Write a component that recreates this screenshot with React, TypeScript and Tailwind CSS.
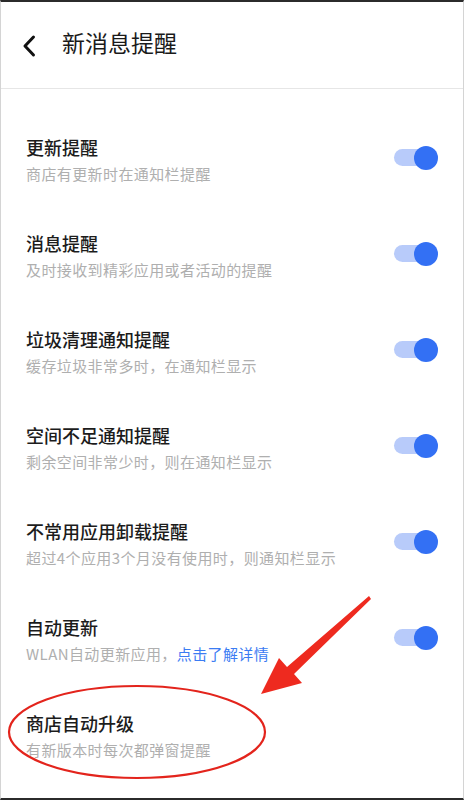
import React from "react";

const rows: { title: string; sub: React.ReactNode; toggle: boolean }[] = [
  { title: "更新提醒", sub: "商店有更新时在通知栏提醒", toggle: true },
  { title: "消息提醒", sub: "及时接收到精彩应用或者活动的提醒", toggle: true },
  { title: "垃圾清理通知提醒", sub: "缓存垃圾非常多时，在通知栏显示", toggle: true },
  { title: "空间不足通知提醒", sub: "剩余空间非常少时，则在通知栏显示", toggle: true },
  { title: "不常用应用卸载提醒", sub: "超过4个应用3个月没有使用时，则通知栏显示", toggle: true },
  {
    title: "自动更新",
    sub: (
      <>
        WLAN自动更新应用，<span className="text-[#3b7cf3]">点击了解详情</span>
      </>
    ),
    toggle: true,
  },
  { title: "商店自动升级", sub: "有新版本时每次都弹窗提醒", toggle: false },
];

function Toggle() {
  return (
    <div className="relative w-[44px] h-[24px] mb-[5px] shrink-0">
      <div className="absolute left-0 top-[3.5px] w-[36px] h-[17px] rounded-full bg-[#b8cbfa]" />
      <div className="absolute right-0 top-0 w-[24px] h-[24px] rounded-full bg-[#3370f4]" />
    </div>
  );
}

export default function App() {
  return (
    <div
      className="relative w-[464px] h-[800px] bg-white border-t-2 border-b-2 border-t-[#2b2b2b] border-b-[#2b2b2b] border-l border-r border-l-[#d4d4d4] border-r-[#d4d4d4] overflow-hidden"
      style={{ fontFamily: '"Noto Sans CJK SC", "Noto Sans", sans-serif' }}
    >
      <div className="h-[86px] flex items-center pl-[20px]">
        <svg width="16" height="24" viewBox="0 0 16 24" className="mt-[1px]">
          <path d="M12.5 3 L4 12 L12.5 21" fill="none" stroke="#111" strokeWidth="3" strokeLinecap="round" strokeLinejoin="round" />
        </svg>
        <div className="ml-[25px] mb-[7px] text-[23px] leading-[30px] text-[#1a1a1a]">新消息提醒</div>
      </div>
      <div className="h-px bg-[#e6e6e6]" />
      <div className="pt-[23px]">
        {rows.map((r, i) => (
          <div key={i} className="h-[96px] flex items-center justify-between pl-[25px] pr-[25px]">
            <div className="flex flex-col">
              <div className="text-[18px] leading-[24px] font-medium text-[#1c1c1c]">{r.title}</div>
              <div className="mt-[3px] text-[15px] leading-[24px] text-[#afafaf] tracking-[0.4px]">{r.sub}</div>
            </div>
            {r.toggle && <Toggle />}
          </div>
        ))}
      </div>
      <svg className="absolute left-0 top-0 pointer-events-none" width="464" height="800" viewBox="0 0 464 800">
        <ellipse cx="136" cy="730" rx="128" ry="46" fill="none" stroke="#e3241c" strokeWidth="2.2" />
        <polygon points="368,594 370,597 293,672 301,681 260,692 278,656 286,665" fill="#ee2a1f" />
      </svg>
    </div>
  );
}
